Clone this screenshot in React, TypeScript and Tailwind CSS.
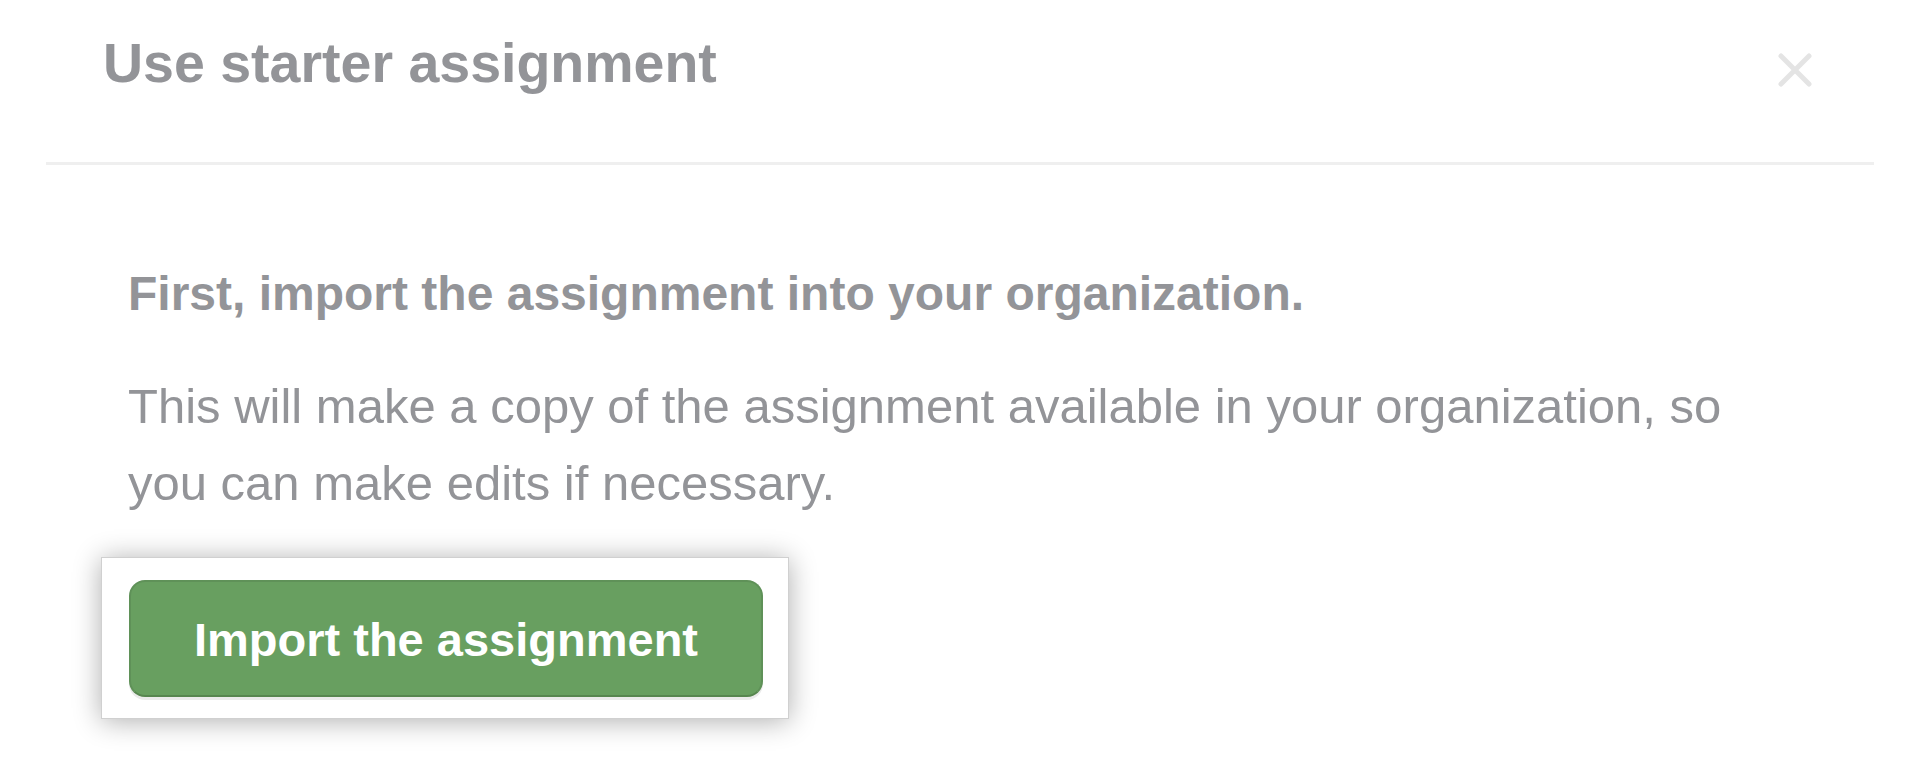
function CloseIcon() {
  return (
    <svg width="34" height="34" viewBox="0 0 34 34" fill="none">
      <path
        d="M3 3 L31 31 M31 3 L3 31"
        stroke="#e4e4e4"
        strokeWidth="5"
        strokeLinecap="round"
      />
    </svg>
  );
}

function App() {
  return (
    <div className="w-full h-[766px] bg-white overflow-hidden font-['Liberation_Sans',Arial,sans-serif] text-[#939498]">
      <div className="flex justify-between items-start h-[162px] pl-[103px] pr-[106px] pt-[31px]">
        <h2 className="text-[55.5px] leading-[64px] font-bold">
          Use starter assignment
        </h2>
        <button className="mt-[22px]" aria-label="Close">
          <CloseIcon />
        </button>
      </div>
      <div className="ml-[46px] w-[1828px] h-[3px] bg-[#efefef]" />

      <div className="pl-[128px] pt-[101px]">
        <p className="text-[48px] leading-[56px] font-bold">
          First, import the assignment into your organization.
        </p>
        <p className="mt-[46px] max-w-[1650px] text-[49px] leading-[77px]">
          This will make a copy of the assignment available in your
          organization, so you can make edits if necessary.
        </p>

        <div className="mt-[35px] -ml-[27px] w-[688px] h-[162px] bg-white border border-[#d0d0d0] shadow-[0_2px_26px_rgba(0,0,0,0.32)] pl-[27px] pt-[22px]">
          <button className="flex items-center justify-center w-[634px] h-[117px] rounded-[16px] bg-[#689f60] border-2 border-[#5f9158] border-b-[#57864f] shadow-[0_3px_0_rgba(0,0,0,0.08)] text-white text-[47px] leading-[48px] font-bold pt-[3px]">
            Import the assignment
          </button>
        </div>
      </div>
    </div>
  );
}

export default App;
